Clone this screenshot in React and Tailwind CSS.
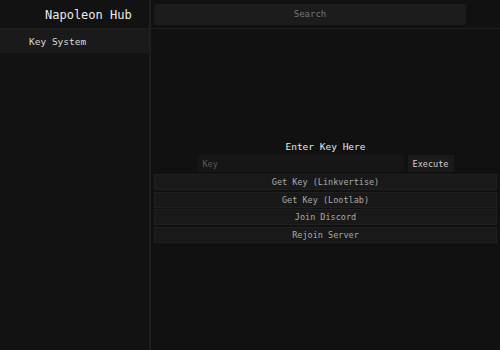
const font = { fontFamily: '"DejaVu Sans Mono", "Liberation Mono", monospace' };

const links = ['Get Key (Linkvertise)', 'Get Key (Lootlab)', 'Join Discord', 'Rejoin Server'];

export default function App() {
  return (
    <div className="w-[500px] h-[350px] bg-[#111111] flex text-[#e6e6e6] overflow-hidden" style={font}>
      {/* Sidebar */}
      <div className="w-[149px] flex flex-col bg-[#121212]">
        <div className="h-[29px] border-b border-[#1f1f1f] flex items-center pl-[45px] pt-[1px] text-[12px] text-[#ececec]">
          Napoleon Hub
        </div>
        <div className="h-[24px] bg-[#1a1a1a] flex items-center pl-[29px] pt-[2px] text-[9.5px] text-[#dadada]">
          Key System
        </div>
      </div>
      <div className="w-[2px] bg-[#1f1f1f]" />

      {/* Main */}
      <div className="flex-1 flex flex-col">
        <div className="h-[29px] border-b border-[#1f1f1f] flex items-center pl-[3px]">
          <div className="w-[312px] h-[21px] bg-[#1c1c1c] rounded-[2px] flex items-center justify-center pt-[1px] text-[9px] text-[#767676]">
            Search
          </div>
        </div>
        <div className="flex-1 flex flex-col justify-center items-center pt-[4px]">
          <div className="text-[9.5px] text-[#e8e8e8] mb-[1px]">Enter Key Here</div>
          <div className="flex gap-[4px] mb-[2px]">
            <div className="w-[206px] h-[17px] bg-[#161616] flex items-center pl-[5px] text-[8.5px] text-[#5a5a5a]">
              Key
            </div>
            <div className="w-[46px] h-[17px] bg-[#1a1a1a] flex items-center justify-center text-[8.5px] text-[#cfcfcf]">
              Execute
            </div>
          </div>
          <div className="w-full px-[3px] flex flex-col gap-[1.5px]">
            {links.map((l) => (
              <div
                key={l}
                className="h-[16px] bg-[#191919] border border-[#202020] flex items-center justify-center text-[8.5px] text-[#ababab]"
              >
                {l}
              </div>
            ))}
          </div>
        </div>
      </div>
    </div>
  );
}
